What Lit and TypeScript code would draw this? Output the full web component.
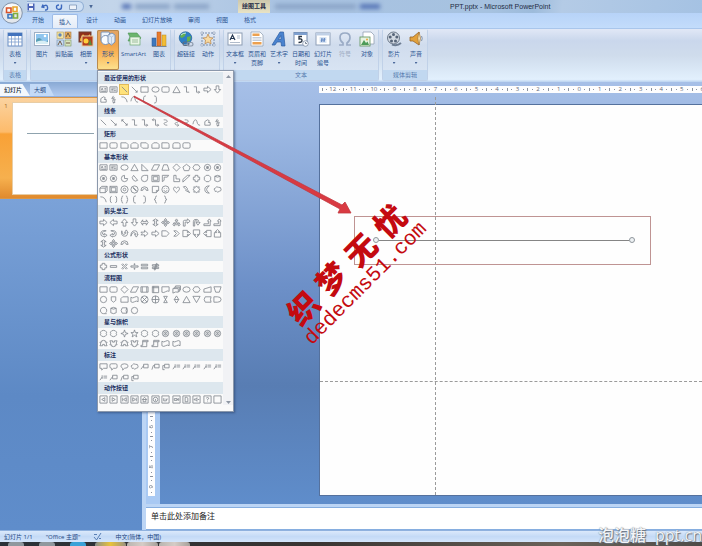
import { LitElement, html, svg, css, TemplateResult } from "lit";
import { customElement, property } from "lit/decorators.js";
import { classMap } from "lit/directives/class-map.js";

// Outline of every gallery shape, on a 10 x 10 grid.
const SHAPES: Record<string, string> = {
  textbox: "M1 2H9V8H1ZM2.5 6 3.5 3.5 4.5 6M6 4H8M6 5.500H8M2.500 7H8",
  vtextbox: "M1 2H9V8H1ZM2.5 3.500H7.500M2.500 5H5M6 5V7M7.500 5V7M2.500 6.500H5",
  line: "M2 2 8 8",
  arrow: "M2 2 8 8M8 6V8H6",
  double: "M2 2 8 8M8 6V8H6M2 4V2H4",
  elbow: "M2 2H5V8H8",
  elbowArrow: "M2 2H5V8H8.500M7 6.500 8.500 8 7 9.500",
  elbowDouble: "M1.500 2H5V8H8.500M7 6.500 8.500 8 7 9.500M3 .5 1.500 2 3 3.500",
  curved: "M3 2C9 2 7 5 5 5S2 8 7 8",
  curvedArrow: "M3 2C9 2 7 5 5 5S2 8 7 8M6 6.500 7.500 8 6 9.500",
  curve: "M1 7C2 1 5 1 5.500 4S7 8 9 8",
  freeform: "M2 4 5 2 7 3 6 5H8V8H2Z",
  scribble: "M5 1 3 4 6 3 4 6 7 5 5 9M4 7 5 9 7 8",
  arc: "M1.500 2Q7 2 8 8",
  rect: "M1 2H9V8H1Z",
  round: "M2.500 2H7.500Q9 2 9 3.500V6.500Q9 8 7.500 8H2.500Q1 8 1 6.500V3.500Q1 2 2.500 2Z",
  snip: "M1 2H7L9 4V8H1Z",
  snip2: "M3 2H7L9 4V8H1V4Z",
  snipDiag: "M1 2H7L9 4V8H3L1 6Z",
  roundTop: "M1 8V4Q1 2 3 2H7Q9 2 9 4V8Z",
  roundOne: "M1 2H7Q9 2 9 4V8H1Z",
  ellipse: "M1 5A4 3 0 1 0 9 5A4 3 0 1 0 1 5",
  circle: "M1.500 5A3.500 3.500 0 1 0 8.500 5A3.500 3.500 0 1 0 1.500 5",
  dotted: "M1.500 5A3.500 3.500 0 1 0 8.500 5A3.500 3.500 0 1 0 1.500 5M4 4H6V6H4ZM5 4V6",
  tri: "M5 1.500 9 8.500H1Z",
  rtri: "M2 1.500 9 8.500H2Z",
  para: "M3.500 2H9.500L6.500 8H.5Z",
  trap: "M3 2H7L9 8H1Z",
  diamond: "M5 1 9 5 5 9 1 5Z",
  pent: "M5 1.500 9 4.500 7.500 8.500H2.500L1 4.500Z",
  hex: "M3 2H7L9 5 7 8H3L1 5Z",
  octagon: "M3.500 1.500H6.500L8.500 3.500V6.500L6.500 8.500H3.500L1.500 6.500V3.500Z",
  pie: "M5 1.500A3.500 3.500 0 1 0 8.500 5H5Z",
  chord: "M4 1.500A3.500 3.500 0 1 0 8.500 7Z",
  tear: "M8.500 1.500V5A3.500 3.500 0 1 1 5 1.500Z",
  frame: "M1 1.500H9V8.500H1ZM2.500 3H7.500V7H2.500Z",
  half: "M1.500 8.500V1.500H8.500L7 3.500H3.500V7Z",
  ell: "M2 1.500H4.500V5.500H8.500V8.500H2Z",
  diag: "M1 9V6L6 1.500H9Z",
  plus: "M3.500 1.500H6.500V3.500H8.500V6.500H6.500V8.500H3.500V6.500H1.500V3.500H3.500Z",
  can: "M2 2.500Q5 .5 8 2.500V7.500Q5 9.500 2 7.500ZM2 2.500Q5 4.500 8 2.500",
  cube: "M1 3.500 3 1.500H9V6.500L7 8.500H1ZM1 3.500H7V8.500M7 3.500 9 1.500",
  bevel: "M1 1.500H9V8.500H1ZM2.500 3H7.500V7H2.500ZM1 1.500 2.500 3M9 8.500 7.500 7M1 8.500 2.500 7",
  donut: "M1 5A4 4 0 1 0 9 5A4 4 0 1 0 1 5M3.500 5A1.500 1.500 0 1 0 6.500 5A1.500 1.500 0 1 0 3.500 5",
  no: "M1 5A4 4 0 1 0 9 5A4 4 0 1 0 1 5M3 3 7 7M3.500 2.500 7.500 6.500",
  blockArc: "M1 6A4 4 0 0 1 9 6H7A2 2 0 0 0 3 6Z",
  fold: "M1.500 1.500H8.500V6L6 8.500H1.500ZM6 8.500V6H8.500",
  smiley: "M1 5A4 4 0 1 0 9 5A4 4 0 1 0 1 5M3 6Q5 8.500 7 6M3.700 3.500V4.200M6.300 3.500V4.200",
  heart: "M5 8.500C-1 4 2.500.5 5 3.500C7.500.5 11 4 5 8.500Z",
  bolt: "M1.500 2 4 1.500 6 4 5.500 4.500 8.500 8.500 4 6 4.500 5Z",
  sun: "M5 1 6 2.500 8 2 7.500 4 9 5 7.500 6 8 8 6 7.500 5 9 4 7.500 2 8 2.500 6 1 5 2.500 4 2 2 4 2.500Z",
  moon: "M7 1Q2 1 2 5T7 9Q4 7 4 5T7 1Z",
  cloud: "M2 6Q0 4 2.500 3.500Q4 1 6 2.500Q9 2 9 5Q9 7 7 7Q5 9 4 7Q2 8 2 6Z",
  brackets: "M3 1.500Q1.500 1.500 1.500 3.500V6.500Q1.500 8.500 3 8.500M7 1.500Q8.500 1.500 8.500 3.500V6.500Q8.500 8.500 7 8.500",
  braces: "M3.500 1Q2 1 2 3T1 5Q2 5 2 7T3.500 9M6.500 1Q8 1 8 3T9 5Q8 5 8 7T6.500 9",
  lparen: "M6.500 1Q4 1 4 3V7Q4 9 6.500 9",
  rparen: "M3.500 1Q6 1 6 3V7Q6 9 3.500 9",
  lbrace: "M6.500 1Q5 1 5 3T3.500 5Q5 5 5 7T6.500 9",
  rbrace: "M3.500 1Q5 1 5 3T6.500 5Q5 5 5 7T3.500 9",
  right: "M1 3.500H5V1.500L9 5 5 8.500V6.500H1Z",
  left: "M9 3.500H5V1.500L1 5 5 8.500V6.500H9Z",
  up: "M3.500 9V5H1.500L5 1 8.500 5H6.500V9Z",
  down: "M3.500 1V5H1.500L5 9 8.500 5H6.500V1Z",
  leftRight: "M1 5 3 2V4H7V2L9 5 7 8V6H3V8Z",
  upDown: "M5 1 8 3H6V7H8L5 9 2 7H4V3H2Z",
  quad: "M5 .5 6.500 2.500H5.500V4.500H7.500V3.500L9.500 5 7.500 6.500V5.500H5.500V7.500H6.500L5 9.500 3.500 7.500H4.500V5.500H2.500V6.500L.5 5 2.500 3.500V4.500H4.500V2.500H3.500Z",
  triple: "M5 1 6.500 3H5.500V6H7.500V5L9 7 7.500 9V7.500H2.500V9L1 7 2.500 5V6H4.500V3H3.500Z",
  bent: "M1.500 9V4Q1.500 2.500 3 2.500H6V1L9 3.500 6 6V4.500H3.500V9Z",
  uturn: "M1.500 9V4Q1.500 1.500 4.500 1.500T7.500 4V5H9L6.500 8 4.500 5H6Q6 3 4.500 3T3 4V9Z",
  bentUp: "M1 6.500H6V3.500H5L7 1 9 3.500H8V8.500H1Z",
  curveRight: "M8 2Q2 1 2 5T6 8V9L9 7 6 5V6.500Q3 6 4 4T8 2Z",
  curveLeft: "M2 2Q8 1 8 5T4 8V9L1 7 4 5V6.500Q7 6 6 4T2 2Z",
  curveUp: "M2 2Q1 8 5 8T8 4H9L7 1 5 4H6.500Q6 6 4 6T2 2Z",
  curveDown: "M1 8Q1 2 5 2T8 6H9L7 9 5 6H6.500Q6 4 4 4T1 8Z",
  notched: "M1 3.500H5V1.500L9 5 5 8.500V6.500H1L2.500 5Z",
  pentagon: "M1 2H6L9 5 6 8H1Z",
  chevron: "M2 2H5L8 5 5 8H2L5 5Z",
  callRight: "M1 1.500H6V4H7V2.500L9.500 5 7 7.500V6H6V8.500H1Z",
  callDown: "M1.500 1H8.500V6H6V7H7.500L5 9.500 2.500 7H4V6H1.500Z",
  callLeft: "M9 1.500H4V4H3V2.500L.5 5 3 7.500V6H4V8.500H9Z",
  callUp: "M1.500 9H8.500V4H6V3H7.500L5 .5 2.500 3H4V4H1.500Z",
  minus: "M1.500 4H8.500V6H1.500Z",
  times: "M2 3 3 2 5 4 7 2 8 3 6 5 8 7 7 8 5 6 3 8 2 7 4 5Z",
  divide: "M1 4.300H9V5.700H1ZM4.500 2H5.500V3H4.500ZM4.500 7H5.500V8H4.500Z",
  equal: "M1.500 2.500H8.500V4.200H1.500ZM1.500 5.800H8.500V7.500H1.500Z",
  notEqual: "M1.500 3H8.500V4.500H1.500ZM1.500 5.800H8.500V7.300H1.500ZM3.500 8.500 6 1.500 7 2 4.500 9Z",
  process: "M1 2H9V8H1ZM2.500 2V8M7.500 2V8",
  storage: "M1.500 1.500H8.500V8.500H1.500ZM3 1.500V8.500M1.500 3H8.500",
  doc: "M1 2H9V7Q7 6 5 7.500T1 8Z",
  docs: "M1 4H7V8Q4 7 1 9ZM2.500 4V2.500H8.500V7H7M4 2.500V1H9.500V5.500H8.500",
  manual: "M1 4.500 9 2V8H1Z",
  operation: "M1 2H9L7 8H3Z",
  square: "M3 3H7V7H3Z",
  offpage: "M2.500 2H7.500V6L5 8 2.500 6Z",
  card: "M3 2H9V8H1V4Z",
  tape: "M1 2.500Q3 4 5 2.500T9 2.500V7.500Q7 6 5 7.500T1 7.500Z",
  crossed: "M1 5A4 4 0 1 0 9 5A4 4 0 1 0 1 5M2.200 2.200 7.800 7.800M7.800 2.200 2.200 7.800",
  summed: "M1 5A4 4 0 1 0 9 5A4 4 0 1 0 1 5M1 5H9M5 1V9",
  collate: "M3 1.500H7L3 8.500H7Z",
  sort: "M5 1 7.500 5 5 9 2.500 5ZM2.500 5H7.500",
  merge: "M1 1.500H9L5 8.500Z",
  stored: "M2.500 2H9Q7.500 5 9 8H2.500Q0 5 2.500 2Z",
  delay: "M1 2H5Q9 2 9 5T5 8H1Z",
  drum: "M2.500 2H7.500Q9 5 7.500 8H2.500Q0 5 2.500 2ZM7.500 2Q6 5 7.500 8",
  seq: "M8.500 8.500H5A3.500 3.500 0 1 1 7.500 7.500",
  burst: "M3 2 5 1.500 7 2 8.500 3.500 8 5 8.500 6.500 7 8 5 8.500 3 8 1.500 6.500 2 5 1.500 3.500Z",
  seal: "M1.500 5A3.500 3.500 0 1 0 8.500 5A3.500 3.500 0 1 0 1.500 5M3.200 5A1.800 1.800 0 1 0 6.800 5A1.800 1.800 0 1 0 3.200 5M5 4V6M2.500 2.500 3.500 3.500M7.500 2.500 6.500 3.500M2.500 7.500 3.500 6.500M7.500 7.500 6.500 6.500",
  star4: "M5 1 6 4 9 5 6 6 5 9 4 6 1 5 4 4Z",
  star5: "M5 1 6 4H9L6.700 5.800 7.600 8.800 5 7 2.400 8.800 3.300 5.800 1 4H4Z",
  ribbonUp: "M1 3.500H3V2Q5 1 7 2V3.500H9L8 5.500 9 7.500H6V6H4V7.500H1L2 5.500Z",
  ribbonDown: "M1 2H4V3.500H6V2H9L8 4.500 9 6.500H7V8Q5 9 3 8V6.500H1L2 4.500Z",
  scroll: "M3 1.500H9V3H7.500V8.500H1V7H3ZM3 3H7.500",
  callRect: "M1 2H9V7H5L3 9V7H1Z",
  callRound: "M2.500 2H7.500Q9 2 9 3.500V5.500Q9 7 7.500 7H5L3 9V7Q1 7 1 5.500V3.500Q1 2 2.500 2Z",
  callEllipse: "M3 9V7Q1 6 1 4.500Q1 2 5 2T9 4.500T5 7Z",
  callLine: "M4 2.500H9V6.500H4ZM4 4 1 8",
  callLine2: "M4 2.500H9V6.500H4ZM4 4H2.500L1 8.500",
  callLine3: "M4 2.500H9V6.500H4ZM4 4H2V8.500H4",
  callBare: "M5 3.500H9M5 5.500H9M3.500 2.500V6.500M3.500 4.500 1 8",
  btnBack: "M1 1H9V9H1ZM6.500 3V7L3 5Z",
  btnNext: "M1 1H9V9H1ZM3.500 3V7L7 5Z",
  btnFirst: "M1 1H9V9H1ZM7 3V7L4 5ZM3 3V7",
  btnLast: "M1 1H9V9H1ZM3 3V7L6 5ZM7 3V7",
  btnHome: "M1 1H9V9H1ZM5 2.500 7.500 5H2.500ZM3.500 5V7.500H6.500V5",
  btnInfo: "M1 1H9V9H1ZM2.500 5A2.500 2.500 0 1 0 7.500 5A2.500 2.500 0 1 0 2.500 5M5 4.500V6.500",
  btnReturn: "M1 1H9V9H1ZM3 3.500V6.500H6V4.500H7.500M4.500 4V5",
  btnMovie: "M1 1H9V9H1ZM2.500 4H5.500V6H2.500ZM5.500 5 7.500 4V6Z",
  btnDoc: "M1 1H9V9H1ZM3.500 2.500H5.500L6.500 3.500V7.500H3.500Z",
  btnSound: "M1 1H9V9H1ZM2.500 4.500H4L5.500 3V7L4 5.500H2.500ZM6.500 5H8",
  btnHelp: "M1 1H9V9H1ZM3.500 3.500Q5 2 6.500 3.500Q6.500 4.500 5 5V6M5 7V7.500",
  btnBlank: "M1 1H9V9H1Z",
};

const GALLERY: { title: string; rows: number; shapes: string }[] = [
  { title: "最近使用的形状", rows: 2, shapes: "textbox vtextbox line arrow rect ellipse round tri elbow elbowArrow right down freeform scribble arc curve lparen rparen" },
  { title: "线条", rows: 1, shapes: "line arrow double elbow elbowArrow elbowDouble curved curvedArrow curvedArrow curve freeform scribble" },
  { title: "矩形", rows: 1, shapes: "rect round snip snip2 snipDiag snip2 roundOne roundTop round" },
  { title: "基本形状", rows: 4, shapes: "textbox vtextbox ellipse tri rtri para trap diamond pent hex dotted dotted dotted dotted pie chord tear frame half ell diag plus octagon can cube bevel donut no blockArc fold smiley heart bolt sun moon cloud arc brackets braces lparen rparen lbrace rbrace" },
  { title: "箭头总汇", rows: 3, shapes: "right left up down leftRight upDown quad triple bent uturn bentUp bentUp curveRight curveLeft curveUp curveDown notched right pentagon chevron callRight callDown callLeft callUp upDown quad blockArc" },
  { title: "公式形状", rows: 1, shapes: "plus minus times divide equal notEqual" },
  { title: "流程图", rows: 3, shapes: "rect round diamond para process storage doc docs ellipse hex manual operation circle offpage card tape crossed summed collate sort tri merge stored delay seq can drum circle" },
  { title: "星与旗帜", rows: 2, shapes: "burst burst star4 star5 burst burst seal seal seal seal seal seal ribbonUp ribbonDown ribbonUp ribbonDown scroll scroll tape tape" },
  { title: "标注", rows: 2, shapes: "callRect callRound callEllipse cloud callLine callLine2 callLine3 callBare callBare callBare callBare callBare callBare callLine callLine2 callLine3" },
  { title: "动作按钮", rows: 1, shapes: "btnBack btnNext btnFirst btnLast btnHome btnInfo btnReturn btnMovie btnDoc btnSound btnHelp btnBlank" },
];

const ICONS: Record<string, TemplateResult> = {
  table: svg`<rect x="1" y="2" width="14" height="13" fill="#fff" stroke="#6d8fc4"/><path d="M1 2H15V5H1Z" fill="#4474bd"/><path d="M1 8H15M1 11H15M4.500 5V15M8 5V15M11.500 5V15" stroke="#7f9fce" stroke-width=".8"/>`,
  picture: svg`<rect x=".5" y="1.500" width="15" height="13" fill="#fff" stroke="#9fb0c5"/><rect x="2" y="3" width="12" height="10" fill="#8fc5ee"/><path d="M2 9Q5 5 8 9T14 9V13H2Z" fill="#5a9fb5"/><path d="M2 11Q7 8 14 11V13H2Z" fill="#d7eef5"/><circle cx="11" cy="5" r="1.300" fill="#fff"/>`,
  clip: svg`<rect x="1" y="1" width="6.500" height="6.500" fill="#f4e3a0" stroke="#b39f63" stroke-width=".6"/><rect x="9" y="1" width="6" height="6.500" fill="#e8b05a" stroke="#a0754a" stroke-width=".6"/><rect x="1" y="9" width="6.500" height="6" fill="#c8dcf0" stroke="#7590b0" stroke-width=".6"/><rect x="9" y="9" width="6" height="6" fill="#d9e6c0" stroke="#7a9464" stroke-width=".6"/><circle cx="4" cy="4" r="1.700" fill="#5f85b8"/><path d="M10 6 12 2 14 6M2 14 4 10 6 14M10 12H14" stroke="#715a45" fill="none"/>`,
  album: svg`<rect x="1" y="1" width="12" height="10" fill="#8e2f1c" stroke="#6e4032"/><path d="M2 8 5 3 8 7 12 3V10H2Z" fill="#f0a531"/><rect x="4" y="5" width="11" height="10" fill="#b53d1f" stroke="#e7cf9d"/><circle cx="8" cy="10" r="2.500" fill="#ffcf3c"/><path d="M10 14 12 8 14 14Z" fill="#5d8838"/>`,
  shapes: svg`<rect x="1" y="1" width="8.500" height="9" rx="1" fill="#eef4fb" stroke="#7891b5"/><circle cx="5.500" cy="9" r="4.500" fill="#f9fcff" stroke="#7891b5"/><path d="M8 4 12 2 15 4V11L11.500 14 8 11.500Z" fill="#dfeaf7" stroke="#7891b5"/><path d="M8 4 11.500 6V14M11.500 6 15 4" stroke="#a8bbd4" stroke-width=".7"/>`,
  smart: svg`<path d="M2 2H11L15 7 12 10H2L4 6Z" fill="#6cb56e" stroke="#4a9152" stroke-width=".6"/><rect x="4" y="6" width="10" height="8" fill="#e9f5e6" stroke="#6aa66f" stroke-width=".7"/><path d="M6 9H12M6 11H12" stroke="#9dbd9c"/>`,
  chart: svg`<rect x="1" y="7" width="4" height="8" fill="#3f78bd" stroke="#2b5a96" stroke-width=".5"/><rect x="6" y="1" width="4" height="14" fill="#e77b2d" stroke="#b2521c" stroke-width=".5"/><rect x="11" y="4" width="4" height="11" fill="#f2bd35" stroke="#b98a22" stroke-width=".5"/><path d="M1 15.500H15.500" stroke="#7b8797"/>`,
  link: svg`<circle cx="7.500" cy="7" r="6.300" fill="#2d7fc6" stroke="#1f5b94" stroke-width=".6"/><path d="M3 3Q6 1 8 2L7 5 4 7 2 6ZM9 6 13 5 12 10 9 11Z" fill="#63b04f"/><path d="M3 4Q5 2 8 2" stroke="#c7e7fb" fill="none"/><rect x="5" y="11" width="6" height="3.500" rx="1.700" fill="none" stroke="#606d7e" stroke-width="1.200"/><rect x="9" y="11.500" width="6" height="3.500" rx="1.700" fill="none" stroke="#8b98aa" stroke-width="1.200"/>`,
  action: svg`<rect x="2" y="2" width="12" height="12" fill="none" stroke="#7b8fae" stroke-dasharray="2 1"/><path d="M8 3 9.500 6.500 13 7 10.500 9 11 13 8 11 5 13 5.500 9 3 7 6.500 6.500Z" fill="#f8d9a0" stroke="#ba8444" stroke-width=".7"/><path d="M1 1H3V3H1ZM13 1H15V3H13ZM1 13H3V15H1ZM13 13H15V15H13Z" fill="#fff" stroke="#7186a7" stroke-width=".5"/>`,
  textbox: svg`<rect x="1" y="2" width="14" height="12" fill="#fff" stroke="#8d9db4"/><path d="M3 9 5.500 4 8 9M4 7.500H7" stroke="#23354f" fill="none" stroke-width="1.200"/><path d="M10 5H13M10 7H13M3 11.500H13" stroke="#9dabbe" stroke-width=".8"/>`,
  header: svg`<path d="M2 1H11L14 4V15H2Z" fill="#fff" stroke="#8a99ad" stroke-width=".7"/><rect x="3.500" y="2.500" width="7" height="2.500" fill="#eca04f"/><rect x="3.500" y="11" width="9" height="2.500" fill="#eca04f"/><path d="M3.500 6.500H12.500M3.500 8H12.500M3.500 9.500H12.500" stroke="#a9b6c7" stroke-width=".7"/>`,
  wordart: svg`<path d="M1 14 9 1H12.500L14 15H10.500L10 11H6L4 14ZM7.500 8.500H10L9.800 4.500Z" fill="#4a83cf" stroke="#2b5ba0" stroke-width=".7" fill-rule="evenodd"/>`,
  date: svg`<rect x="1" y="1.500" width="13" height="12.500" fill="#fff" stroke="#7186a6"/><path d="M1 1.500H14V4H1Z" fill="#7ea0d0"/><path d="M9 5.500H6V8Q9 7.500 9 9.500T5.500 11.500" stroke="#263242" fill="none" stroke-width="1.300"/><circle cx="12.500" cy="12.500" r="2.800" fill="#f5f8fc" stroke="#73839a" stroke-width=".7"/><path d="M12.500 11V12.500H14" stroke="#4d5c70" stroke-width=".7" fill="none"/>`,
  number: svg`<rect x="1" y="2" width="14" height="12" fill="#fff" stroke="#8fa0b8"/><path d="M1 2H15V4.500H1Z" fill="#c0d0e6"/><rect x="4.500" y="6" width="7" height="6" fill="#d9e5f4"/><path d="M7 7 6.500 11M9.500 7 9 11M6 8.200H10.500M5.700 9.800H10" stroke="#4a76b8" stroke-width=".7"/>`,
  omega: svg`<path d="M2 14H6V12Q3 10 3 6.500Q3 2 8 2T13 6.500Q13 10 10 12V14H14" fill="none" stroke="#9aabc5" stroke-width="1.700"/>`,
  object: svg`<path d="M4 1H12L15 4V13H4Z" fill="#fff" stroke="#8796ab" stroke-width=".7"/><rect x="1" y="6" width="10" height="9" fill="#e7f3e1" stroke="#5d9258" stroke-width=".8"/><path d="M2 14 5 9 7 12 8.500 10.500 10 14Z" fill="#4d9b58"/><circle cx="8" cy="8.500" r="1" fill="#e8a73a"/>`,
  movie: svg`<circle cx="7.500" cy="7" r="6" fill="#d3dae3" stroke="#5f6c7d" stroke-width=".9"/><g fill="#566478"><circle cx="7.500" cy="3.500" r="1.500"/><circle cx="4.200" cy="6" r="1.500"/><circle cx="10.800" cy="6" r="1.500"/><circle cx="5.500" cy="10" r="1.500"/><circle cx="9.500" cy="10" r="1.500"/></g><path d="M6 13.500Q11 15.500 15 12" stroke="#6d7d92" stroke-width="2" fill="none"/>`,
  sound: svg`<path d="M2 6H5L11 1V14L5 10H2Z" fill="#e3a13b" stroke="#94652a" stroke-width=".8"/><path d="M11 1Q14 7 11 14Q8.500 7 11 1Z" fill="#fbe0a4" stroke="#94652a" stroke-width=".6"/><path d="M13.500 5Q15 7.500 13.500 10" stroke="#8393a9" fill="none"/>`,
};

interface Command {
  icon: string;
  lines: string[];
  drop?: boolean;
  off?: boolean;
  menu?: boolean;
}

// The illustrations group has its caption under the open gallery, so only its aria-label carries the name.
const GROUPS: { name: string; covered?: boolean; items: Command[] }[] = [
  { name: "表格", items: [{ icon: "table", lines: ["表格"], drop: true }] },
  {
    name: "插图",
    covered: true,
    items: [
      { icon: "picture", lines: ["图片"] },
      { icon: "clip", lines: ["剪贴画"] },
      { icon: "album", lines: ["相册"], drop: true },
      { icon: "shapes", lines: ["形状"], drop: true, menu: true },
      { icon: "smart", lines: ["SmartArt"] },
      { icon: "chart", lines: ["图表"] },
    ],
  },
  { name: "链接", covered: true, items: [{ icon: "link", lines: ["超链接"] }, { icon: "action", lines: ["动作"] }] },
  {
    name: "文本",
    items: [
      { icon: "textbox", lines: ["文本框"], drop: true },
      { icon: "header", lines: ["页眉和", "页脚"] },
      { icon: "wordart", lines: ["艺术字"], drop: true },
      { icon: "date", lines: ["日期和", "时间"] },
      { icon: "number", lines: ["幻灯片", "编号"] },
      { icon: "omega", lines: ["符号"], off: true },
      { icon: "object", lines: ["对象"] },
    ],
  },
  { name: "媒体剪辑", items: [{ icon: "movie", lines: ["影片"], drop: true }, { icon: "sound", lines: ["声音"], drop: true }] },
];

const base = css`
  * {
    box-sizing: border-box;
  }
  button {
    font: inherit;
    color: inherit;
    background: none;
    border: 0;
    padding: 0;
    margin: 0;
    white-space: nowrap;
  }
  svg {
    display: block;
  }
`;

@customElement("shape-gallery")
export class ShapeGallery extends LitElement {
  static styles = [
    base,
    css`
      :host {
        display: flex;
        width: 137px;
        height: 342px;
        padding: 1px 0 6px;
        background: #fafafa;
        border: 1px solid #8b98ab;
        box-shadow: 1px 1px 2px rgba(30, 50, 90, 0.5);
      }
      .list {
        flex: 1;
        display: flex;
        flex-direction: column;
      }
      .group {
        display: flex;
        flex-direction: column;
      }
      .rows1 { flex: 1 0 22px; }
      .rows2 { flex: 2 0 32px; }
      .rows3 { flex: 3 0 42px; }
      .rows4 { flex: 4 0 52px; }
      h3 {
        margin: 0;
        padding-left: 6px;
        height: 12px;
        line-height: 12px;
        font-size: 6px;
        font-weight: 700;
        color: #1c2f5e;
        background: #dde7ee;
      }
      .grid {
        flex: 1;
        display: grid;
        grid-template-columns: repeat(12, 1fr);
        grid-auto-rows: 1fr;
      }
      .shape {
        display: grid;
        place-items: center;
        min-width: 0;
        min-height: 0;
      }
      .shape svg {
        width: 9px;
        height: 9px;
        fill: none;
        stroke: #80868d;
        stroke-width: 0.9;
      }
      .picked {
        background: #ffe27a;
        outline: 1px solid #e0b95a;
        outline-offset: -1px;
      }
      .scroll {
        width: 10px;
        display: flex;
        flex-direction: column;
        align-items: center;
        justify-content: space-between;
        padding: 3px 0 1px;
        background: #f1f2f5;
      }
      .scroll svg {
        width: 5px;
        height: 3px;
        fill: #8e96a3;
      }
    `,
  ];

  render() {
    return html`
      <div class="list">
        ${GALLERY.map(
          (g, gi) => html`<section class="group rows${g.rows}">
            <h3>${g.title}</h3>
            <div class="grid">
              ${g.shapes.split(" ").map(
                (name, i) => html`<button class=${classMap({ shape: true, picked: gi === 0 && i === 2 })} aria-label=${name}>
                  <svg viewBox="0 0 10 10"><path d=${SHAPES[name]} /></svg>
                </button>`
              )}
            </div>
          </section>`
        )}
      </div>
      <div class="scroll">
        <svg viewBox="0 0 5 3"><path d="M0 3H5L2.500 0Z" /></svg>
        <svg viewBox="0 0 5 3"><path d="M0 0H5L2.500 3Z" /></svg>
      </div>
    `;
  }
}

@customElement("ribbon-bar")
export class RibbonBar extends LitElement {
  static styles = [
    base,
    css`
      :host {
        display: flex;
        gap: 3px;
        height: 54px;
        padding: 0 3px;
        background: linear-gradient(#e1e8f6, #cad7ec 22%, #cfdcec 50%, #e2f0fd 95%, #b9d2f0);
        border-top: 1px solid #a9c6ec;
        color: #2b5390;
      }
      .group {
        display: flex;
        flex-direction: column;
        height: 52px;
        border: 1px solid #c0d1e8;
        border-top-color: #dce6f3;
        border-radius: 2px;
        background: linear-gradient(#e4ebf6, #d0dced 30%, #dbe7f5);
      }
      .items {
        flex: 1;
        display: flex;
      }
      .name {
        height: 10px;
        line-height: 10px;
        text-align: center;
        color: #5478ae;
        background: #c1d8f0;
      }
      .slot {
        position: relative;
        display: flex;
      }
      .cmd {
        width: 22px;
        height: 40px;
        display: flex;
        flex-direction: column;
        align-items: center;
        line-height: 9px;
        padding-top: 1px;
      }
      .wide {
        width: 29px;
      }
      .cmd svg {
        width: 16px;
        height: 16px;
        margin-bottom: 3px;
      }
      .off {
        color: #9dabc2;
      }
      .open {
        border-radius: 2px;
        background: linear-gradient(#e2a567, #f0a34b 35%, #fbb75a 60%, #fde391);
        box-shadow: inset 0 0 0 1px #b98a4f;
      }
      .caret {
        width: 3px;
        height: 2px;
        margin-top: 3px;
        background: #4a689a;
        clip-path: polygon(0 0, 100% 0, 50% 100%);
      }
      shape-gallery {
        position: absolute;
        top: 100%;
        left: 0;
        z-index: 5;
      }
    `,
  ];

  render() {
    return GROUPS.map(
      (g) => html`<div class="group" role="group" aria-label=${g.name}>
        <div class="items">
          ${g.items.map(
            (c) => html`<div class="slot">
              <button class=${classMap({ cmd: true, wide: c.icon === "smart", off: !!c.off, open: !!c.menu })} ?disabled=${c.off}>
                <svg viewBox="0 0 16 16" fill="none">${ICONS[c.icon]}</svg>
                ${c.lines.map((l) => html`<span>${l}</span>`)}
                ${c.drop ? html`<span class="caret"></span>` : ""}
              </button>
              ${c.menu ? html`<shape-gallery></shape-gallery>` : ""}
            </div>`
          )}
        </div>
        <div class="name">${g.covered ? "" : g.name}</div>
      </div>`
    );
  }
}

@customElement("edit-ruler")
export class EditRuler extends LitElement {
  @property({ type: Boolean, reflect: true }) vertical = false;
  @property({ attribute: false }) marks: number[] = [];

  static styles = [
    base,
    css`
      :host {
        display: flex;
        overflow: hidden;
        background: #fdfdfe;
        color: #5d6676;
        font-size: 6px;
        line-height: 7px;
      }
      :host([vertical]) {
        flex-direction: column;
        justify-content: flex-end;
      }
      .mark {
        flex: 0 0 calc(100% / 18.5);
        display: flex;
        align-items: center;
        justify-content: space-between;
      }
      :host([vertical]) .mark {
        flex-basis: 20px;
        flex-direction: column;
      }
      :host([vertical]) .num {
        writing-mode: vertical-rl;
        transform: rotate(180deg);
      }
      .dot {
        width: 1px;
        height: 1px;
        background: #8b929e;
      }
      .bar {
        width: 1px;
        height: 3px;
        background: #8b929e;
      }
      :host([vertical]) .bar {
        width: 3px;
        height: 1px;
      }
    `,
  ];

  render() {
    return this.marks.map(
      (m) => html`<span class="mark"><i class="bar"></i><i class="dot"></i><span class="num">${m}</span><i class="dot"></i><i></i></span>`
    );
  }
}

@customElement("app-root")
export class AppRoot extends LitElement {
  static styles = [
    base,
    css`
      :host {
        position: relative;
        display: flex;
        flex-direction: column;
        min-height: 100vh;
        overflow: hidden;
        font: 6px/8px "Open Sans", "Noto Sans CJK SC", sans-serif;
        color: #1f2c44;
        background: #bcd5f5;
      }
      .title {
        display: flex;
        align-items: center;
        height: 13px;
        padding-left: 27px;
        background: linear-gradient(100deg, #b9cfe6 0, #c3d5ea 16%, #a9c3e2 40%, #a6c2e0 70%, #9dbbdb 76%, #b4cbe6 80%, #a5c2e3);
      }
      .quick {
        display: flex;
        align-items: center;
        gap: 6px;
        width: 57px;
        height: 11px;
        border: 1px solid #90aed4;
        border-left: 0;
        border-radius: 0 6px 6px 0;
        background: #cddff4;
      }
      .quick svg {
        width: 8px;
        height: 8px;
      }
      .more {
        width: 4px;
        height: 4px;
        margin-left: 5px;
        background: #4a6796;
        clip-path: polygon(0 0, 100% 0, 50% 100%);
      }
      .ghosts {
        display: flex;
        gap: 4px;
        width: 145px;
        padding: 0 29px;
        filter: blur(2px);
      }
      .ghost {
        flex: 4;
        height: 5px;
        background: #8aa3c6;
      }
      .ghost.small {
        flex: 1;
        background: #5674b5;
      }
      .context {
        width: 32px;
        height: 13px;
        line-height: 13px;
        text-align: center;
        font-weight: 600;
        background: linear-gradient(#cdc8ad, #e8e3c5);
      }
      .ghosts.after {
        width: 130px;
        padding: 0 20px 0 5px;
      }
      h1 {
        flex: 1;
        margin: 0 0 0 50px;
        font: 7px/8px "Liberation Sans", sans-serif;
        white-space: nowrap;
      }
      .orb {
        position: absolute;
        left: 1px;
        top: 2px;
        z-index: 3;
        width: 22px;
        height: 22px;
      }
      .tabs {
        display: flex;
        height: 15px;
        padding-left: 24px;
        background: linear-gradient(#b7d3f8, #c3dcfb);
        color: #2b5390;
      }
      .tab {
        width: 28px;
        line-height: 15px;
      }
      .tab.long {
        width: 46px;
      }
      .tab.on {
        height: 15px;
        width: 26px;
        margin-top: 1px;
        line-height: 12px;
        border: 1px solid #9dbbe6;
        border-bottom: 0;
        border-radius: 2px 2px 0 0;
        background: linear-gradient(#f3f8fd, #e4ebf6);
      }
      ribbon-bar {
        z-index: 4;
      }
      .work {
        flex: 1;
        display: grid;
        grid-template-columns: 142px 1fr;
        gap: 4px;
      }
      .side {
        display: flex;
        flex-direction: column;
        background: linear-gradient(#93b1e0, #7ba2d8 26%, #5d89c5 70%, #5f8dcb);
      }
      .sidetabs {
        display: flex;
        height: 14px;
        padding-top: 2px;
        background: linear-gradient(#89a9d4, #b2cbf0);
      }
      .sidetab {
        height: 12px;
        line-height: 11px;
        padding: 0 8px 0 4px;
        background: #c3daf7;
        clip-path: polygon(0 0, 75% 0, 100% 100%, 0 100%);
        color: #24487f;
      }
      .sidetab.on {
        background: #f4f8fd;
        color: #101c30;
        font-weight: 500;
      }
      .thumb {
        display: flex;
        height: 102px;
        margin: 1px 6px 0 0;
        padding: 4px 4px 3px 0;
        border: 1px solid #d89648;
        border-left: 0;
        background: linear-gradient(#fbd3a0, #fdbb6b 34%, #f9a136 36%, #f6b04e 80%, #e08a2e);
      }
      .thumb span {
        width: 12px;
        text-align: center;
        color: #a3671f;
      }
      .page {
        flex: 1;
        padding: 30px 36px 0 14px;
        background: #fff;
        border: 1px solid #e8cda5;
      }
      .page hr {
        margin: 0;
        border: 0;
        height: 1px;
        background: #8fa3ae;
      }
      .main {
        display: flex;
        flex-direction: column;
      }
      .editor {
        flex: 1;
        display: grid;
        grid-template-columns: 14px 159px 1fr;
        grid-template-rows: 22px 1fr 8px;
        background: linear-gradient(#a6bfe7, #9bb7e2 12%, #6d90c8 48%, #587db3 72%, #5f8dcb);
      }
      .gutter {
        grid-row: 1 / 4;
        display: flex;
        padding: 22px 5px 8px 2px;
        background: #a9c9f3;
      }
      .gutter edit-ruler {
        width: 7px;
      }
      .top {
        grid-column: 3;
        height: 7px;
        margin-top: 4px;
        padding-left: 3px;
      }
      .slide {
        grid-column: 3;
        position: relative;
        background: #fefefe;
        border: 1px solid #55719d;
        border-width: 1px 0 1px 1px;
      }
      .guide {
        position: absolute;
        left: 115px;
        top: -8px;
        bottom: 0;
        border-left: 1px dashed #9b9b9b;
      }
      .guide.across {
        left: 0;
        right: 0;
        top: 276px;
        bottom: auto;
        border-left: 0;
        border-top: 1px dashed #9b9b9b;
      }
      .box {
        position: absolute;
        left: 34px;
        top: 111px;
        width: 297px;
        height: 49px;
        padding: 20px 15px 0 18px;
        border: 1px solid #bf9493;
      }
      .connector {
        display: flex;
        align-items: center;
      }
      .connector i {
        width: 6px;
        height: 6px;
        border: 1px solid #8f969c;
        border-radius: 50%;
        background: #eef2f4;
      }
      .connector b {
        flex: 1;
        height: 1px;
        background: #858585;
      }
      .notes {
        display: block;
        width: 100%;
        height: 23px;
        margin-top: 3px;
        padding: 2px 5px;
        resize: none;
        border: 1px solid #86aee0;
        border-width: 1px 0 1px 0;
        background: #fff;
        font: 8px/12px "Noto Sans CJK SC", sans-serif;
        outline: 0;
      }
      .notes::placeholder {
        color: #222;
      }
      .status {
        display: flex;
        align-items: center;
        gap: 13px;
        height: 12px;
        padding-left: 4px;
        color: #21457f;
        background: linear-gradient(#dbe9fb, #c4daf6 50%, #d4e5fb);
        border-top: 1px solid #8fb1de;
      }
      .status svg {
        width: 9px;
        height: 9px;
      }
      .task {
        display: flex;
        gap: 1px;
        height: 4px;
        padding-left: 8px;
        background: linear-gradient(90deg, #2a3138, #3a3432 45%, #6b6259 80%, #4e4b48);
      }
      .app {
        width: 16px;
        margin-right: 14px;
        border-radius: 3px 3px 0 0;
        background: #8f989e;
      }
      .app.blue {
        margin-right: 8px;
        background: #3aa2d8;
      }
      .app.gold,
      .app.wide {
        width: 31px;
        margin-right: 0;
        background: linear-gradient(90deg, #8a8f8c, #e8c23a, #9a9484);
      }
      .app.wide {
        background: linear-gradient(90deg, #b9b5b0, #d5ccc6, #a7a19b);
      }
      .pointer {
        position: absolute;
        left: 130px;
        top: 94px;
        width: 224px;
        height: 122px;
        z-index: 6;
      }
      .mark {
        position: absolute;
        left: 354px;
        top: 272px;
        z-index: 7;
        width: 0;
        height: 0;
        display: flex;
        flex-direction: column;
        align-items: center;
        justify-content: center;
        color: #c40a10;
        transform: rotate(-45deg);
      }
      .brush {
        display: flex;
        gap: 10px;
        font: 900 31px/34px "Noto Sans CJK SC", sans-serif;
      }
      .domain {
        font: 21px/24px "Liberation Mono", monospace;
      }
      .credit {
        position: absolute;
        right: 0;
        bottom: 0;
        z-index: 7;
        display: flex;
        gap: 9px;
        font: 500 16px/22px "Open Sans", "Noto Sans CJK SC", sans-serif;
        color: #f3f5f8;
        text-shadow: 0 0 1px #66717f, 1px 1px 1px #66717f;
      }
    `,
  ];

  private marks = Array.from({ length: 19 }, (_, i) => Math.abs(12 - i));

  render() {
    return html`
      <header class="title">
        <div class="quick">
          <svg viewBox="0 0 8 8"><path d="M.5.5H7.500V7.500H.5Z" fill="#4a62b4" /><path d="M2 .5H6V3H2ZM2 5H6V7.500H2Z" fill="#f3f6fc" /></svg>
          <svg viewBox="0 0 8 8"><path d="M2 1.500 1 4 3.500 4.500M1.500 3.800Q6 .5 6.500 4T4 7" fill="none" stroke="#3c68bd" stroke-width="1.400" /></svg>
          <svg viewBox="0 0 8 8"><path d="M6.500 1.500V4Q6.500 6.500 4 6.500T1.500 4Q1.500 2 4 2" fill="none" stroke="#3c68bd" stroke-width="1.400" /></svg>
          <svg viewBox="0 0 8 8"><path d="M.5 2H7.500V6.500H.5Z" fill="#eef3fa" stroke="#7c94b8" stroke-width=".8" /></svg>
        </div>
        <span class="more"></span>
        <div class="ghosts"><i class="ghost small"></i><i class="ghost"></i><i class="ghost"></i></div>
        <span class="context">绘图工具</span>
        <div class="ghosts after"><i class="ghost"></i><i class="ghost small"></i></div>
        <h1>PPT.pptx - Microsoft PowerPoint</h1>
      </header>
      <button class="orb" aria-label="Office">
        <svg viewBox="0 0 22 22">
          <circle cx="11" cy="11" r="10.300" fill="#e3e7ec" stroke="#8494ab" />
          <ellipse cx="11" cy="7" rx="8" ry="5" fill="#f8fafb" />
          <g fill="none" stroke-width="1.600">
            <path d="M5.500 6H10V10.500H5.500Z" stroke="#d9542b" />
            <path d="M12 5H16V9.500H12Z" stroke="#e9a52c" />
            <path d="M7 12.500H11V16H7Z" stroke="#3d77bd" />
            <path d="M12.500 11.500H16.500V16H12.500Z" stroke="#7fae3e" />
          </g>
        </svg>
      </button>
      <nav class="tabs">
        <button class="tab">开始</button><button class="tab on">插入</button><button class="tab">设计</button
        ><button class="tab">动画</button><button class="tab long">幻灯片放映</button><button class="tab">审阅</button
        ><button class="tab">视图</button><button class="tab">格式</button>
      </nav>
      <ribbon-bar></ribbon-bar>
      <div class="work">
        <aside class="side">
          <div class="sidetabs"><button class="sidetab on">幻灯片</button><button class="sidetab">大纲</button></div>
          <div class="thumb"><span>1</span><div class="page"><hr /></div></div>
        </aside>
        <main class="main">
          <div class="editor">
            <div class="gutter"><edit-ruler vertical .marks=${[6, 7, 8, 9]}></edit-ruler></div>
            <edit-ruler class="top" .marks=${this.marks}></edit-ruler>
            <div class="slide">
              <div class="guide"></div>
              <div class="guide across"></div>
              <div class="box"><div class="connector"><i></i><b></b><i></i></div></div>
            </div>
          </div>
          <textarea class="notes" aria-label="备注" placeholder="单击此处添加备注"></textarea>
        </main>
      </div>
      <footer class="status">
        <span>幻灯片 1/1</span><span>"Office 主题"</span>
        <svg viewBox="0 0 9 9"><path d="M1 5 3.500 8 8 1M1 2.500H4M6 6.500H8" fill="none" stroke="#5a7fb5" /></svg>
        <span>中文(简体，中国)</span>
      </footer>
      <div class="task">
        <i class="app"></i><i class="app"></i><i class="app blue"></i><i class="app gold"></i><i class="app wide"></i><i class="app wide"></i>
      </div>
      <svg class="pointer" viewBox="0 0 224 122">
        <path d="M4 2 212 111 215 108 221 119 208 119 210 115 4 3Z" fill="#d93a42" stroke="#c23840" stroke-width=".8" stroke-linejoin="round" />
      </svg>
      <div class="mark">
        <div class="brush"><span>织</span><span>梦</span><span>无</span><span>忧</span></div>
        <div class="domain">dedecms51.com</div>
      </div>
      <div class="credit"><span>泡泡糖</span><span>ppt.cn</span></div>
    `;
  }
}
